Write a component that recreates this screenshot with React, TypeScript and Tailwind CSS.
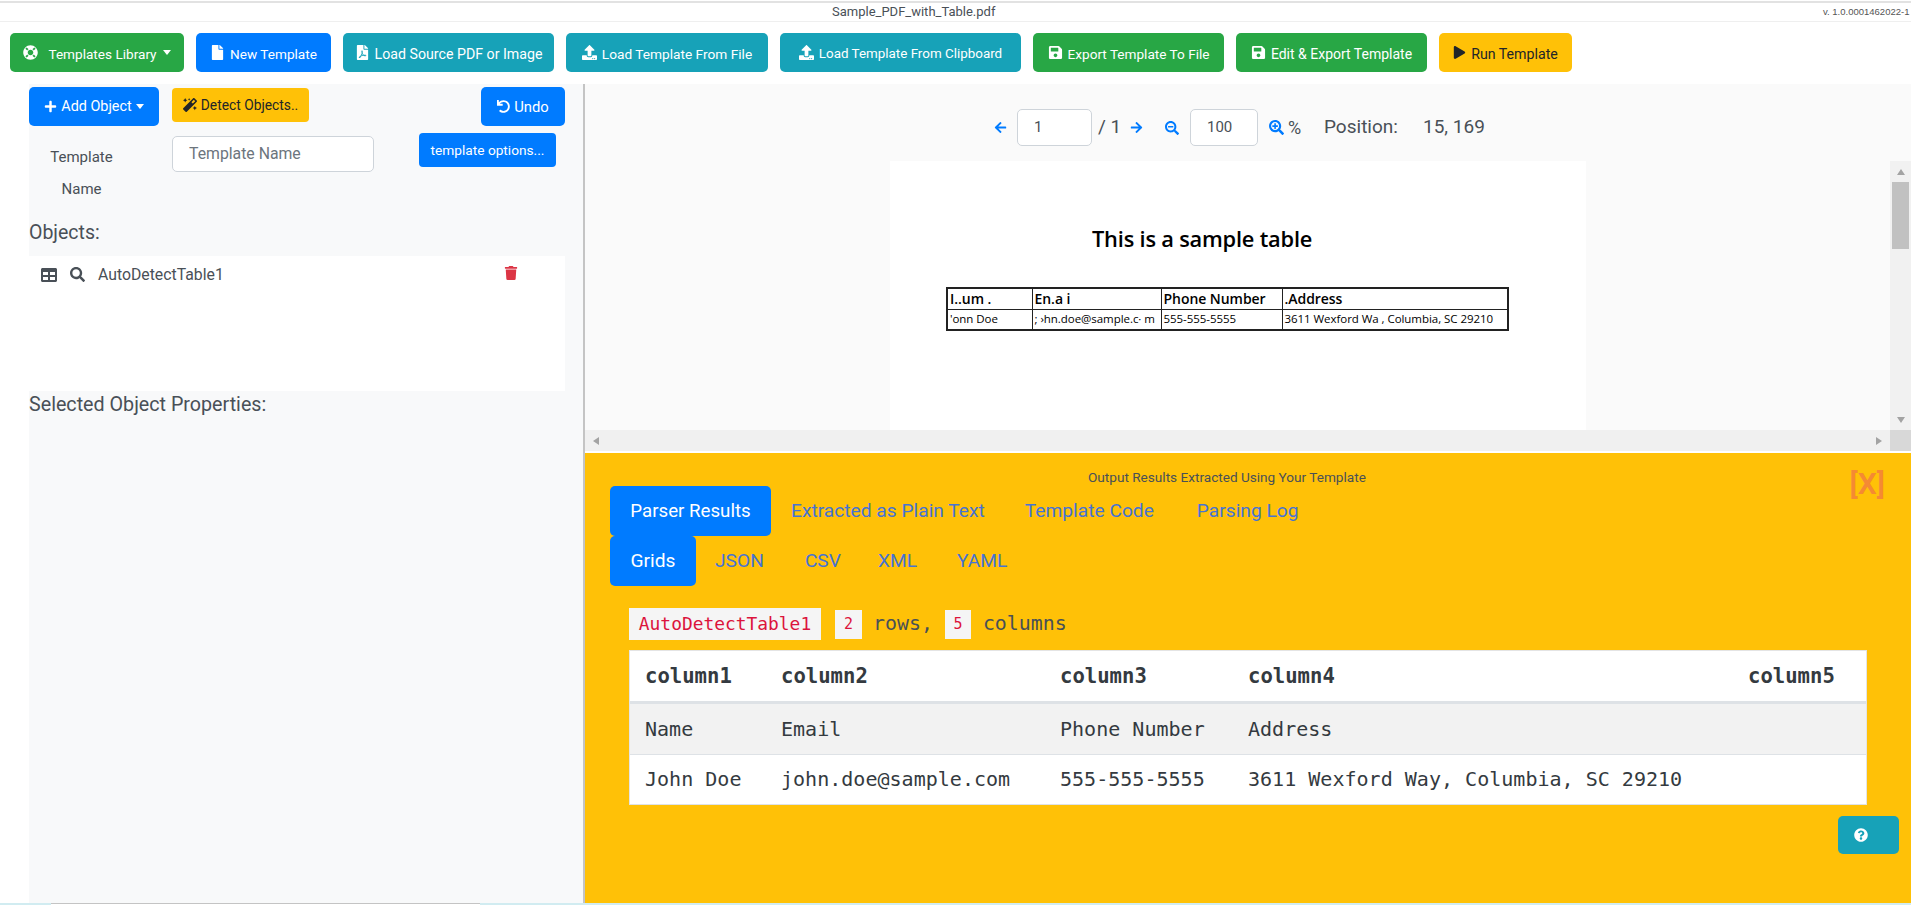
import React from "react";
import {
  FaLifeRing, FaFile, FaFilePdf, FaUpload, FaSave, FaPlay, FaPlus, FaMagic, FaUndo, FaTable, FaSearch, FaTrash,
  FaArrowLeft, FaArrowRight, FaSearchMinus, FaSearchPlus, FaQuestionCircle,
} from "react-icons/fa";

const sans = "font-['Roboto','Open_Sans',sans-serif]";
const mono = "font-['DejaVu_Sans_Mono','Liberation_Mono',monospace]";

function TopBtn({ w, color, size, icon, label, caret }: { w: string; color: string; size: string; icon: React.ReactNode; label: string; caret?: boolean }) {
  return (
    <button className={`${w} ${color} ${size} h-[39px] shrink-0 rounded-[5px] flex items-center justify-center gap-[5px] whitespace-nowrap`}>
      {icon}
      <span className="leading-[20px] pt-[2px]">{label}</span>
      {caret && <span className="w-0 h-0 ml-[1px] border-x-[4.5px] border-x-transparent border-t-[5px] border-t-current" />}
    </button>
  );
}

function Arrow({ dir }: { dir: "up" | "down" | "left" | "right" }) {
  const pts = { up: "1,8 5,2 9,8", down: "1,2 5,8 9,2", left: "8,1 2,5 8,9", right: "2,1 8,5 2,9" }[dir];
  return (
    <svg width="10" height="10" viewBox="0 0 10 10" className="shrink-0">
      <polygon points={pts} fill="#a3a3a3" />
    </svg>
  );
}

export default function App() {
  return (
    <div className={`${sans} w-[1911px] h-[905px] overflow-hidden bg-white flex flex-col text-[#495057]`}>
      {/* title strip */}
      <div className="h-[21px] shrink-0 mt-px border-t-2 border-t-[#e2e2e2] border-b border-b-[#efefef] flex items-center pl-[832px]">
        <span className="text-[13px] text-[#495057]">Sample_PDF_with_Table.pdf</span>
        <span className="ml-auto w-[88px] whitespace-nowrap font-['Liberation_Sans',sans-serif] text-[9.5px] text-[#555]">v. 1.0.0001462022-1</span>
      </div>

      {/* main toolbar */}
      <div className="h-[62px] shrink-0 flex items-start pt-[11px] pl-[10px] gap-[12px] text-white">
        <TopBtn w="w-[174px]" size="text-[13.6px]" color="bg-[#28a745]" icon={<FaLifeRing size={15} className="mr-[5px]" />} label="Templates Library" caret />
        <TopBtn w="w-[135px]" size="text-[13.6px]" color="bg-[#007bff]" icon={<FaFile size={15} />} label="New Template" />
        <TopBtn w="w-[211px]" size="text-[14.2px]" color="bg-[#17a2b8]" icon={<FaFilePdf size={15} />} label="Load Source PDF or Image" />
        <TopBtn w="w-[202px]" size="text-[13.7px]" color="bg-[#17a2b8]" icon={<FaUpload size={15} />} label="Load Template From File" />
        <TopBtn w="w-[241px]" size="text-[13.4px]" color="bg-[#17a2b8]" icon={<FaUpload size={15} />} label="Load Template From Clipboard" />
        <TopBtn w="w-[191px]" size="text-[13.6px]" color="bg-[#28a745]" icon={<FaSave size={15} />} label="Export Template To File" />
        <TopBtn w="w-[191px]" size="text-[14px]" color="bg-[#28a745]" icon={<FaSave size={15} />} label="Edit & Export Template" />
        <TopBtn w="w-[133px]" size="text-[14.2px]" color="bg-[#ffc107] text-[#212529]" icon={<FaPlay size={13} />} label="Run Template" />
      </div>

      <div className="flex-1 min-h-0 flex">
        {/* left column */}
        <div className="w-[583px] shrink-0 pl-[29px]">
          <div className="h-full bg-[#f8f9fa]">
            <div className="flex items-start pt-[3px] w-[536px]">
              <button className="w-[130px] h-[39px] bg-[#007bff] text-white rounded-[5px] flex items-center justify-center gap-[4px] text-[14.4px]">
                <FaPlus size={13} />
                <span className="pt-px">Add Object</span>
                <span className="w-0 h-0 border-x-[4.5px] border-x-transparent border-t-[5px] border-t-current" />
              </button>
              <button className="ml-[13px] mt-px w-[137px] h-[34px] bg-[#ffc107] text-[#212529] rounded-[4px] flex items-center justify-center gap-[4px] text-[13.8px]">
                <FaMagic size={14} />
                <span className="pt-px">Detect Objects..</span>
              </button>
              <button className="ml-auto w-[84px] h-[39px] bg-[#007bff] text-white rounded-[5px] flex items-center justify-center gap-[4px] text-[14.8px]">
                <FaUndo size={13} />
                <span className="pt-px">Undo</span>
              </button>
            </div>

            <div className="flex items-start mt-[7px] h-[84px]">
              <div className="w-[105px] mt-[8px] text-center text-[15px] leading-[32px]">
                Template<br />Name
              </div>
              <div className="ml-[38px] mt-[3px] w-[202px] h-[36px] bg-white border border-[#ced4da] rounded-[5px] pl-[16px] flex items-center text-[15.8px] text-[#6c757d]">
                Template Name
              </div>
              <button className="ml-[45px] w-[137px] h-[34px] bg-[#007bff] text-white rounded-[4px] text-[13.7px]">
                template options...
              </button>
            </div>

            <div className="text-[19.5px] leading-[32px] h-[39px]">Objects:</div>
            <div className="w-[536px] h-[135px] bg-white flex items-start pt-[9px] pl-[12px] pr-[47px]">
              <FaTable size={16} className="mt-[2px]" />
              <FaSearch size={15} className="ml-[13px] mt-[2px]" />
              <span className="ml-[13px] text-[15.8px] leading-[20px]">AutoDetectTable1</span>
              <FaTrash size={14} className="ml-auto mt-[1px] text-[#dc3545]" />
            </div>
            <div className="text-[19.7px] leading-[26px] mt-[1px]">Selected Object Properties:</div>
          </div>
        </div>

        <div className="w-[2px] shrink-0 bg-[#c4c4c4]" />

        {/* right column */}
        <div className="flex-1 min-w-0 flex flex-col">
          <div className="h-[367px] shrink-0 bg-[#fafafa] flex flex-col">
            <div className="h-[77px] shrink-0 flex items-center text-[19px] pt-[10px]">
              <FaArrowLeft size={13} className="ml-[409px] text-[#007bff]" />
              <div className="ml-[10px] w-[75px] h-[37px] bg-white border border-[#ced4da] rounded-[5px] pl-[16px] flex items-center text-[15px]">1</div>
              <span className="ml-[6px] w-[26px]">/ 1</span>
              <FaArrowRight size={13} className="ml-[6px] text-[#007bff]" />
              <FaSearchMinus size={14} className="ml-[22px] text-[#007bff]" />
              <div className="ml-[11px] w-[68px] h-[37px] bg-white border border-[#ced4da] rounded-[5px] pl-[16px] flex items-center text-[15px]">100</div>
              <FaSearchPlus size={15} className="ml-[11px] text-[#007bff]" />
              <span className="ml-[4px] w-[16px] text-[18px]">%</span>
              <span className="ml-[20px] w-[99px]">Position:</span>
              <span>15, 169</span>
            </div>
            <div className="flex-1 min-h-0 flex">
              <div className="w-[305px] shrink-0" />
              <div className="w-[696px] shrink-0 bg-white flex flex-col items-start font-['Open_Sans',sans-serif] text-black overflow-hidden">
                <div className="mt-[63px] ml-[202px] text-[21.8px] font-semibold leading-[30px] tracking-[-0.2px]">This is a sample table</div>
                <table className="mt-[33px] ml-[56px] w-[563px] border-collapse border-2 border-[#222] text-[11.5px] tracking-[-0.05px] leading-[18px] table-fixed">
                  <tbody>
                    <tr className="h-[21px] font-semibold text-[14px]">
                      <td className="w-[85px] border border-[#222] pl-[2px]">I..um .</td>
                      <td className="w-[129px] border border-[#222] pl-[2px]">En.a i</td>
                      <td className="w-[121px] border border-[#222] pl-[2px]">Phone Number</td>
                      <td className="border border-[#222] pl-[2px]">.Address</td>
                    </tr>
                    <tr className="h-[21px]">
                      <td className="border border-[#222] pl-[2px]">'onn Doe</td>
                      <td className="border border-[#222] pl-[2px]">; ›hn.doe@sample.c· m</td>
                      <td className="border border-[#222] pl-[2px]">555-555-5555</td>
                      <td className="border border-[#222] pl-[2px] whitespace-nowrap">3611 Wexford Wa ,  Columbia, SC 29210</td>
                    </tr>
                  </tbody>
                </table>
              </div>
              <div className="flex-1" />
              <div className="w-[21px] shrink-0 bg-[#f1f1f1] flex flex-col items-center">
                <div className="h-[21px] flex items-center"><Arrow dir="up" /></div>
                <div className="w-[17px] h-[67px] bg-[#c1c1c1]" />
                <div className="mt-auto h-[21px] flex items-center"><Arrow dir="down" /></div>
              </div>
            </div>
            <div className="h-[21px] shrink-0 bg-[#f0f0f0] flex items-center">
              <div className="ml-[6px]"><Arrow dir="left" /></div>
              <div className="ml-auto mr-[6px]"><Arrow dir="right" /></div>
              <div className="w-[21px] h-full bg-[#d8d8d8]" />
            </div>
          </div>

          <div className="h-[2px] shrink-0 bg-white" />

          <div className="relative flex-1 min-h-0 bg-[#ffc107]">
            <div className="absolute right-[26px] top-[12px] text-[30px] leading-[38px] font-semibold text-[#f58a33]">[X]</div>
            <div className="h-[33px] pt-[15px] pl-[503px] text-[13.6px] leading-[18px]">Output Results Extracted Using Your Template</div>
            <div className="pl-[25px] flex h-[50px] text-[19.2px] text-[#4673d4]">
              <div className="w-[161px] bg-[#007bff] text-white rounded-[5px] flex items-center justify-center pt-px text-[18.7px]">Parser Results</div>
              <div className="ml-[20px] flex items-center pt-px">Extracted as Plain Text</div>
              <div className="ml-[40px] flex items-center pt-px">Template Code</div>
              <div className="ml-[43px] flex items-center pt-px">Parsing Log</div>
            </div>
            <div className="pl-[25px] flex h-[50px] text-[19.2px] text-[#4673d4]">
              <div className="w-[86px] bg-[#007bff] text-white rounded-[5px] flex items-center justify-center pt-px">Grids</div>
              <div className="ml-[19px] flex items-center pt-px">JSON</div>
              <div className="ml-[41px] flex items-center pt-px">CSV</div>
              <div className="ml-[37px] flex items-center pt-px">XML</div>
              <div className="ml-[40px] flex items-center pt-px">YAML</div>
            </div>

            <div className={`${mono} mt-[22px] ml-[44px] flex items-center h-[32px] text-[19.9px] text-[#495057]`}>
              <span className="w-[192px] h-[32px] bg-[#f5f5f5] text-[#dc143c] text-[17.9px] flex items-center justify-center">AutoDetectTable1</span>
              <span className="ml-[14px] w-[27px] h-[29px] bg-[#f5f5f5] text-[#dc143c] text-[15px] flex items-center justify-center">2</span>
              <span className="ml-[11px]">rows,</span>
              <span className="ml-[12px] w-[26px] h-[29px] bg-[#f5f5f5] text-[#dc143c] text-[15px] flex items-center justify-center">5</span>
              <span className="ml-[12px]">columns</span>
            </div>

            <div className={`${mono} mt-[10px] ml-[44px] w-[1238px] bg-white text-[20.05px] text-[#343a40] border-x border-[#e4e4e4]`}>
              <div className="h-[51px] flex items-center font-bold text-[20.6px] border-t border-[#e4e4e4]">
                <span className="ml-[15px] w-[136px]">column1</span>
                <span className="w-[279px]">column2</span>
                <span className="w-[188px]">column3</span>
                <span className="w-[500px]">column4</span>
                <span>column5</span>
              </div>
              <div className="h-[53px] flex items-center bg-[#f2f2f2] border-t-[3px] border-[#dee2e6] border-b-0">
                <span className="ml-[15px] w-[136px]">Name</span>
                <span className="w-[279px]">Email</span>
                <span className="w-[188px]">Phone Number</span>
                <span>Address</span>
              </div>
              <div className="h-[51px] flex items-center border-y border-[#dee2e6] whitespace-nowrap">
                <span className="ml-[15px] w-[136px]">John Doe</span>
                <span className="w-[279px]">john.doe@sample.com</span>
                <span className="w-[188px]">555-555-5555</span>
                <span>3611 Wexford Way, Columbia, SC 29210</span>
              </div>
            </div>

            <div className="flex justify-end pr-[12px] mt-[11px]">
              <button className="w-[61px] h-[38px] bg-[#17a2b8] text-white rounded-[5px] flex items-center pl-[16px]">
                <FaQuestionCircle size={14} />
              </button>
            </div>
          </div>
        </div>
      </div>

      {/* bottom strip */}
      <div className="h-[2px] shrink-0 flex bg-[#d1ecf1]">
        <div className="ml-[51px] w-[429px] bg-white border-t border-[#c4c4c4]" />
      </div>
    </div>
  );
}
